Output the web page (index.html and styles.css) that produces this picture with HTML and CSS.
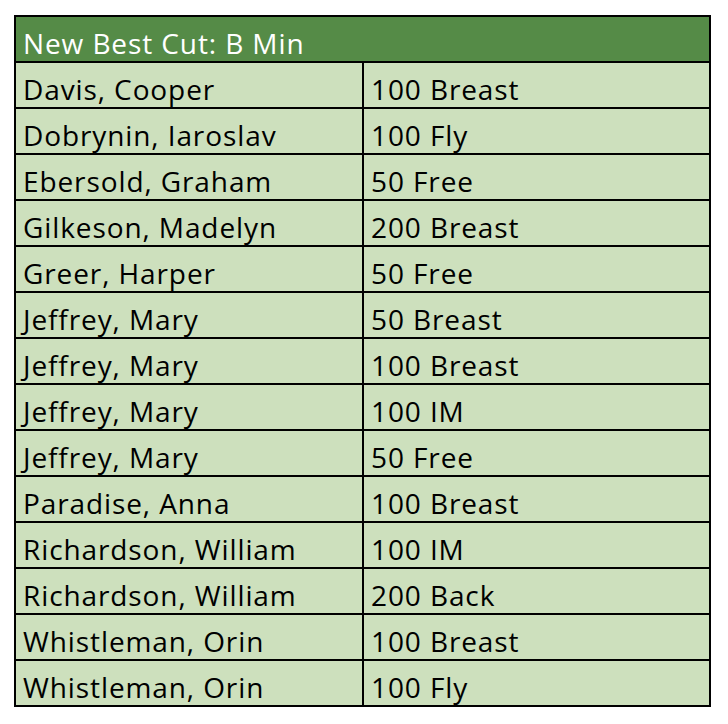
FILE: index.html
```html
<!DOCTYPE html>
<html>
<head>
<meta charset="utf-8">
<link rel="stylesheet" href="styles.css">
</head>
<body>
<div class="sheet">
  <div class="head">New Best Cut: B Min</div>
  <div class="row"><div class="name">Davis, Cooper</div><div class="event">100 Breast</div></div>
  <div class="row"><div class="name">Dobrynin, Iaroslav</div><div class="event">100 Fly</div></div>
  <div class="row"><div class="name">Ebersold, Graham</div><div class="event">50 Free</div></div>
  <div class="row"><div class="name">Gilkeson, Madelyn</div><div class="event">200 Breast</div></div>
  <div class="row"><div class="name">Greer, Harper</div><div class="event">50 Free</div></div>
  <div class="row"><div class="name">Jeffrey, Mary</div><div class="event">50 Breast</div></div>
  <div class="row"><div class="name">Jeffrey, Mary</div><div class="event">100 Breast</div></div>
  <div class="row"><div class="name">Jeffrey, Mary</div><div class="event">100 IM</div></div>
  <div class="row"><div class="name">Jeffrey, Mary</div><div class="event">50 Free</div></div>
  <div class="row"><div class="name">Paradise, Anna</div><div class="event">100 Breast</div></div>
  <div class="row"><div class="name">Richardson, William</div><div class="event">100 IM</div></div>
  <div class="row"><div class="name">Richardson, William</div><div class="event">200 Back</div></div>
  <div class="row"><div class="name">Whistleman, Orin</div><div class="event">100 Breast</div></div>
  <div class="row"><div class="name">Whistleman, Orin</div><div class="event">100 Fly</div></div>
</div>
</body>
</html>
```
FILE: styles.css
```css
html, body {
  margin: 0;
  padding: 0;
  background: #ffffff;
}
body {
  font-family: "Open Sans", Lato, sans-serif;
  font-size: 28px;
  letter-spacing: 0.9px;
  color: #000000;
}
.sheet {
  margin: 15px 0 0 14px;
  width: 693px;
  border: 2px solid #000000;
  background: #cde0bd;
}
.head {
  height: 44px;
  box-sizing: border-box;
  padding: 8px 0 0 7px;
  line-height: 36px;
  background: #558b47;
  color: #ffffff;
  white-space: nowrap;
}
.row {
  display: grid;
  grid-template-columns: 346px 347px;
  border-top: 2px solid #000000;
  height: 44px;
}
.name, .event {
  box-sizing: border-box;
  height: 44px;
  padding: 8px 0 0 7px;
  line-height: 36px;
  white-space: nowrap;
}
.event {
  border-left: 2px solid #000000;
}
```
